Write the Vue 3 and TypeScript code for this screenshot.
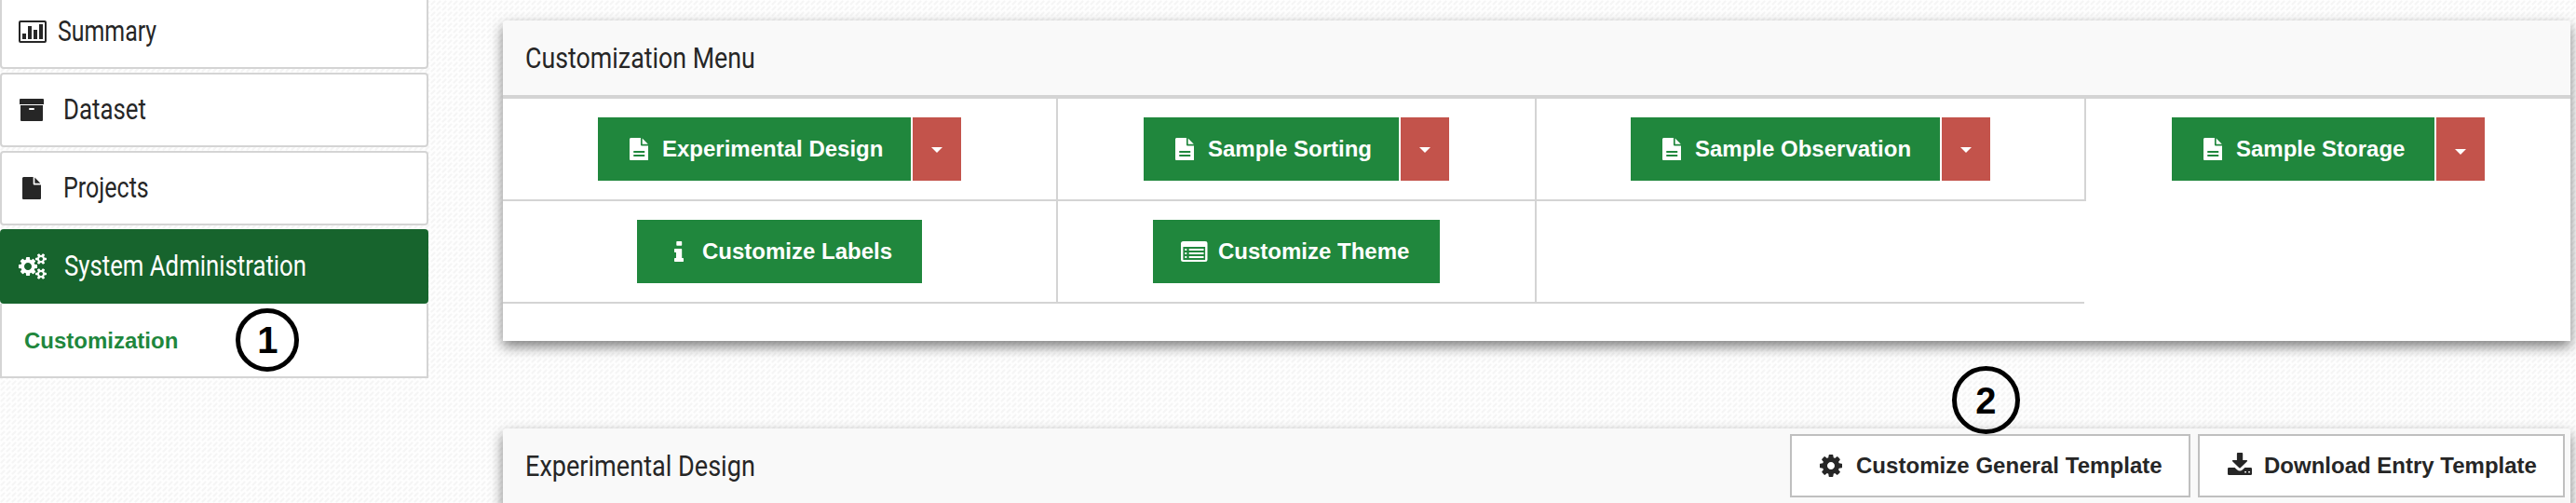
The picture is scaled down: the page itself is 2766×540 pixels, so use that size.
<script setup lang="ts">
import type { Directive } from 'vue'

interface NavItem { label: string; icon: string; width: number; active?: boolean }
interface MenuCell { label?: string; icon?: string; split?: boolean; cls: string; width?: number }

const nav: NavItem[] = [
  { label: 'Summary', icon: 'chart', width: 106 },
  { label: 'Dataset', icon: 'archive', width: 89 },
  { label: 'Projects', icon: 'file', width: 92 },
  { label: 'System Administration', icon: 'cogs', width: 260, active: true },
]

const cells: MenuCell[] = [
  { label: 'Experimental Design', icon: 'filetext', split: true, cls: 'line', width: 336 },
  { label: 'Sample Sorting', icon: 'filetext', split: true, cls: 'line', width: 274 },
  { label: 'Sample Observation', icon: 'filetext', split: true, cls: 'line', width: 332 },
  { label: 'Sample Storage', icon: 'filetext', split: true, cls: 'open low', width: 282 },
  { label: 'Customize Labels', icon: 'info', cls: 'line', width: 306 },
  { label: 'Customize Theme', icon: 'list', cls: 'line', width: 308 },
  { cls: 'under' },
]

// Condenses a label horizontally so that it takes the given width.
const vFit: Directive<HTMLElement, number> = {
  mounted(el, { value }) {
    el.style.transform = `scaleX(${value / el.offsetWidth})`
  },
}

const smallCog = 'v140q0 16-149 31-12 27-30 52 51 113 51 138 0 4-4 7-122 71-124 71-8 0-46-47t-52-68q-20 2-30 2t-30-2q-14 21-52 68t-46 47q-2 0-124-71-4-3-4-7 0-25 51-138-18-25-30-52-149-15-149-31v-140q0-16 149-31 13-29 30-52-51-113-51-138 0-4 4-7 4-2 35-20t59-34 30-16q8 0 46 46.500t52 67.500q20-2 30-2t30 2q51-71 92-112l6-2q4 0 124 70 4 3 4 7 0 25-51 138 17 23 30 52 149 15 149 31z'

const icons: Record<string, { box: string; w: number; h: number; d: string }> = {
  chart: { box: '0 0 30 24', w: 30, h: 24, d: 'M2 0h26a2 2 0 0 1 2 2v20a2 2 0 0 1-2 2h-26a2 2 0 0 1-2-2v-20a2 2 0 0 1 2-2zM2.500 2a.5.5 0 0 0-.5.5v19a.5.5 0 0 0 .5.5h25a.5.5 0 0 0 .5-.5v-19a.5.5 0 0 0-.5-.5zM4 14h4v6h-4zM10 6h4v14h-4zM16 10h4v10h-4zM22 4h4v16h-4z' },
  archive: { box: '0 0 26 24', w: 26, h: 24, d: 'M1 0h24a1 1 0 0 1 1 1v5h-26v-5a1 1 0 0 1 1-1zM1 7h24v16a1 1 0 0 1-1 1h-22a1 1 0 0 1-1-1zM11 10a1 1 0 0 0 0 2h4a1 1 0 0 0 0-2z' },
  file: { box: '128 0 1536 1792', w: 20, h: 24, d: 'M1152 512v-472q22 14 36 28l408 408q14 14 28 36h-472zm-128 32q0 40 28 68t68 28h544v1056q0 40-28 68t-68 28h-1344q-40 0-68-28t-28-68v-1600q0-40 28-68t68-28h800v544z' },
  filetext: { box: '128 0 1536 1792', w: 20.5, h: 24, d: 'M1152 512v-472q22 14 36 28l408 408q14 14 28 36h-472zm-128 32q0 40 28 68t68 28h544v1056q0 40-28 68t-68 28h-1344q-40 0-68-28t-28-68v-1600q0-40 28-68t68-28h800v544zM448 1045v149h896v-149zM448 1344v149h896v-149z' },
  info: { box: '0 0 10 22', w: 10, h: 22, d: 'M3 0h4.500a.7.7 0 0 1 .7.7v3.400a.7.7 0 0 1-.7.7h-4.500a.7.7 0 0 1-.7-.7v-3.400a.7.7 0 0 1 .7-.7zM.7 8h6.800a.7.7 0 0 1 .7.7v9.300h1a.7.7 0 0 1 .8.7v2.600a.7.7 0 0 1-.8.7h-8.500a.7.7 0 0 1-.7-.7v-2.600a.7.7 0 0 1 .7-.7h1.300v-6h-1.300a.7.7 0 0 1-.7-.7v-2.600a.7.7 0 0 1 .7-.7z' },
  list: { box: '0 0 28.500 22', w: 28.5, h: 22, d: 'M2.500 0h23.500a2.500 2.500 0 0 1 2.500 2.500v17a2.500 2.500 0 0 1-2.500 2.500h-23.500a2.500 2.500 0 0 1-2.500-2.500v-17a2.500 2.500 0 0 1 2.500-2.500zM2.400 6v13.400a.6.6 0 0 0 .6.6h22.500a.6.6 0 0 0 .6-.6v-13.400zM4.300 8h2v2h-2zM4.300 12h2v2h-2zM4.300 16h2v2h-2zM8.700 8h15.800v2h-15.800zM8.700 12h15.800v2h-15.800zM8.700 16h15.800v2h-15.800z' },
  download: { box: '0 0 26 24', w: 26, h: 24, d: 'M10.800 0h4.500a.9.9 0 0 1 .9.9v7.100h4.300q1 .3.400 1.200l-7.200 7.100q-.7.500-1.400 0l-7.200-7.100q-.6-.9.400-1.200h4.400v-7.100a.9.9 0 0 1 .9-.9zM1.300 16h6.300l2.400 2.200q3 2.500 6 0l2.400-2.200h6.300a1.300 1.300 0 0 1 1.300 1.300v5.400a1.300 1.300 0 0 1-1.300 1.300h-23.400a1.300 1.300 0 0 1-1.300-1.300v-5.400a1.300 1.300 0 0 1 1.300-1.300zM18.200 20v1.600h1.700v-1.600zM22.200 20v1.600h1.700v-1.600z' },
  cog: { box: '128 128 1536 1536', w: 24, h: 24, d: 'M1152 896q0-106-75-181t-181-75-181 75-75 181 75 181 181 75 181-75 75-181zm512-109v222q0 12-8 23t-20 13l-185 28q-19 54-39 91 35 50 107 138 10 12 10 25t-9 23q-27 37-99 108t-94 71q-12 0-26-9l-138-108q-44 23-91 38-16 136-29 186-7 28-36 28h-222q-14 0-24.500-8.500t-11.500-21.500l-28-184q-49-16-90-37l-141 107q-10 9-25 9-14 0-25-11-126-114-165-168-7-10-7-23 0-12 8-23 15-21 51-66.500t54-70.500q-27-50-41-99l-183-27q-13-2-21-12.500t-8-23.500v-222q0-12 8-23t19-13l186-28q14-46 39-92-40-57-107-138-10-12-10-24 0-10 9-23 26-36 98.500-107.500t94.500-71.500q13 0 26 10l138 107q44-23 91-38 16-136 29-186 7-28 36-28h222q14 0 24.500 8.500t11.500 21.500l28 184q49 16 90 37l142-107q9-9 24-9 13 0 25 10 129 119 165 170 7 8 7 22 0 12-8 23-15 21-51 66.500t-54 70.500q26 50 41 98l183 28q13 2 21 12.500t8 23.500z' },
  cogs: { box: '0 0 1920 1792', w: 30, h: 28, d: 'M896 896q0-106-75-181t-181-75-181 75-75 181 75 181 181 75 181-75 75-181zm768 512q0-52-38-90t-90-38-90 38-38 90q0 53 37.500 90.500t90.500 37.500 90.500-37.500 37.500-90.500zm0-1024q0-52-38-90t-90-38-90 38-38 90q0 53 37.500 90.500t90.500 37.500 90.500-37.500 37.500-90.500zm-384 421v185q0 10-7 19.500t-16 10.500l-155 24q-11 35-32 76 34 48 90 115 7 11 7 20 0 12-7 19-23 30-82.500 89.500t-78.500 59.500q-11 0-21-7l-115-90q-37 19-77 31-11 108-23 155-7 24-30 24h-186q-11 0-20-7.500t-10-17.500l-23-153q-34-10-75-31l-118 89q-7 7-20 7-11 0-21-8-144-133-144-160 0-9 7-19 10-14 41-53t47-61q-23-44-35-82l-152-24q-10-1-17-9.500t-7-19.500v-185q0-10 7-19.500t16-10.500l155-24q11-35 32-76-34-48-90-115-7-11-7-20 0-12 7-20 22-30 82-89t79-59q11 0 21 7l115 90q34-18 77-32 11-108 23-154 7-24 30-24h186q11 0 20 7.500t10 17.500l23 153q34 10 75 31l118-89q8-7 20-7 11 0 21 8 144 133 144 160 0 8-7 19-12 16-42 54t-45 60q23 48 34 82l152 23q10 2 17 10.500t7 19.500zM1920 1338' + smallCog + 'M1920 314' + smallCog },
}
</script>

<template>
  <div class="page">
    <nav class="sidebar">
      <a v-for="n in nav" :key="n.label" class="item" :class="[n.icon, { active: n.active }]">
        <span class="slot">
          <svg :viewBox="icons[n.icon].box" :width="icons[n.icon].w" :height="icons[n.icon].h" preserveAspectRatio="none"><path :d="icons[n.icon].d" fill-rule="evenodd" /></svg>
        </span>
        <span v-fit="n.width" class="cond">{{ n.label }}</span>
      </a>
      <div class="sub">
        <a>Customization</a>
        <span class="step one">1</span>
      </div>
    </nav>

    <main>
      <section class="panel">
        <header><h2 v-fit="247" class="cond">Customization Menu</h2></header>
        <div class="grid">
          <div v-for="(c, i) in cells" :key="i" class="cell" :class="c.cls">
            <template v-if="c.label && c.icon">
              <button class="btn" :class="c.icon" :style="{ width: c.width + 'px' }">
                <span class="slot">
                  <svg :viewBox="icons[c.icon].box" :width="icons[c.icon].w" :height="icons[c.icon].h" preserveAspectRatio="none"><path :d="icons[c.icon].d" fill-rule="evenodd" /></svg>
                </span>
                <span>{{ c.label }}</span>
              </button>
              <button v-if="c.split" class="drop"><i class="caret"></i></button>
            </template>
          </div>
        </div>
      </section>

      <section class="panel second">
        <header>
          <h2 v-fit="247" class="cond">Experimental Design</h2>
          <div class="actions">
            <button class="plain general">
              <svg :viewBox="icons.cog.box" width="24" height="24"><path :d="icons.cog.d" fill-rule="evenodd" /></svg>
              <span>Customize General Template</span>
              <span class="step two">2</span>
            </button>
            <button class="plain entry">
              <svg :viewBox="icons.download.box" width="26" height="24"><path :d="icons.download.d" fill-rule="evenodd" /></svg>
              <span>Download Entry Template</span>
            </button>
          </div>
        </header>
      </section>
    </main>
  </div>
</template>

<style>
body { margin: 0; overflow: hidden; }
</style>

<style scoped>
.page {
  width: 2766px;
  height: 540px;
  overflow: hidden;
  display: flex;
  box-sizing: border-box;
  color: #262626;
  font-family: "Liberation Sans", Arial, sans-serif;
  background-color: #fefefe;
  background-image: url("data:image/svg+xml,%3Csvg xmlns='http://www.w3.org/2000/svg' width='6' height='6'%3E%3Cpath d='M1.500 4.500L4.500 1.500' stroke='%23f5f5f5' stroke-width='2.200' stroke-linecap='round'/%3E%3C/svg%3E");
}
.page * { box-sizing: border-box; }
svg { display: block; fill: currentColor; flex: none; }
.sidebar { width: 460px; margin-top: -6px; flex: none; }
.item {
  display: flex;
  align-items: center;
  height: 80px;
  margin-bottom: 4px;
  padding-left: 18px;
  border: 2px solid #d4d4d4;
  border-radius: 4px;
  background: #fff;
}
.item .slot { width: 48px; flex: none; }
.item.chart .slot { width: 42px; }
.item.archive svg { margin-left: 1px; }
.item.file svg { margin-left: 4px; }
.item.cogs .slot { width: 49px; }
.item.active { margin-bottom: 0; color: #fff; background: #17642d; border-color: #17642d; }
.cond {
  margin: 0;
  font: 400 31px/40px Roboto, sans-serif;
  white-space: nowrap;
  transform-origin: 0 50%;
}
h2.cond { font-size: 32px; }
.sub {
  display: flex;
  align-items: center;
  height: 80px;
  padding-left: 24px;
  border: 2px solid #d4d4d4;
  border-top: 0;
  background: #fff;
  color: #1f873d;
  font-weight: 700;
  font-size: 24px;
}
.sub a { padding-top: 2px; }
.step {
  display: flex;
  align-items: center;
  justify-content: center;
  flex: none;
  border: 5px solid #000;
  border-radius: 50%;
  color: #000;
  font-size: 40px;
  font-weight: 700;
  line-height: 1;
}
.one { width: 68px; height: 68px; margin-left: 62px; }
.two { position: absolute; left: 172px; top: -75px; width: 73px; height: 73px; }
main { width: 2220px; margin-left: 80px; padding-top: 22px; flex: none; }
.panel {
  height: 344px;
  background: #fff;
  border-radius: 4px 4px 0 0;
  box-shadow: 0 6px 14px rgba(0, 0, 0, .5);
}
.second { margin-top: 94px; }
header {
  display: flex;
  align-items: center;
  justify-content: space-between;
  height: 84px;
  padding: 0 6px 0 24px;
  border-bottom: 4px solid #d4d4d4;
  border-radius: 4px 4px 0 0;
  background: #f9f9f9;
}
.grid { display: grid; grid-template-columns: 596px 514px 590px 520px; grid-auto-rows: 110px; }
.cell { display: flex; justify-content: center; align-items: center; gap: 2px; }
.line { border-right: 2px solid #d4d4d4; border-bottom: 2px solid #d4d4d4; }
.under { border-bottom: 2px solid #d4d4d4; margin-right: 2px; }
.open { padding-bottom: 2px; }
button {
  height: 68px;
  margin: 0;
  border: 0;
  font: 700 24px/28px "Liberation Sans", Arial, sans-serif;
  white-space: nowrap;
}
.btn { display: flex; align-items: center; padding: 0 0 0 33.500px; background: #20873d; color: #fff; }
.btn .slot { width: 35.500px; flex: none; }
.btn.info .slot { width: 30px; }
.btn.info { padding-left: 40px; }
.btn.list { padding-left: 30px; }
.btn.list .slot { width: 40px; }
.drop { display: flex; align-items: center; justify-content: center; width: 52px; padding: 0; background: #c3534b; }
.caret { border: 6px solid transparent; border-top-color: #fff; border-bottom: 0; margin-top: 2px; }
.low .caret { margin-top: 6px; }
.actions { display: flex; gap: 8px; }
.plain {
  position: relative;
  display: flex;
  align-items: center;
  padding: 0 0 0 30px;
  border: 2px solid #bfbfbf;
  background: #fff;
  color: #262626;
}
.general { width: 430px; letter-spacing: .04px; }
.general svg { margin-right: 15px; }
.entry { width: 394px; }
.entry svg { margin: 0 13px 4px 0; }
</style>
